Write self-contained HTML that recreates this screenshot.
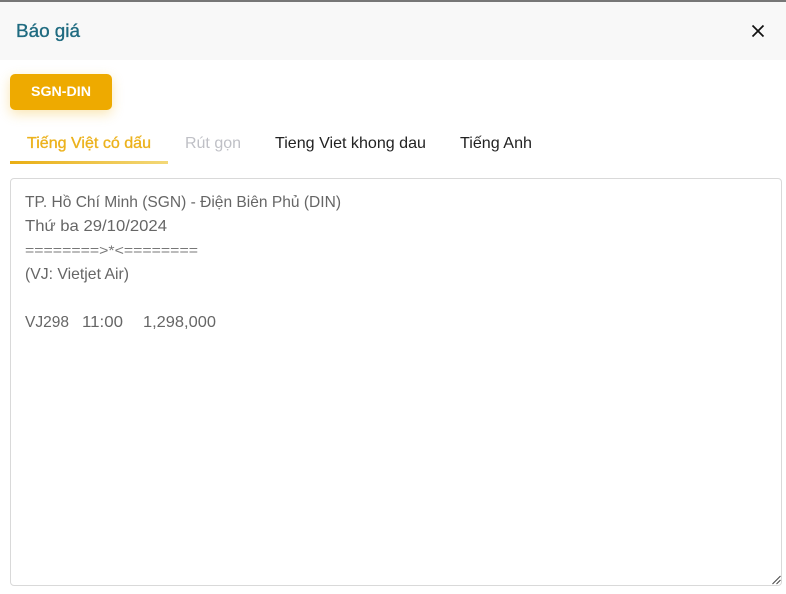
<!DOCTYPE html>
<html lang="vi">
<head>
<meta charset="utf-8">
<title>Báo giá</title>
<style>
html,body{margin:0;padding:0;width:786px;height:594px;overflow:hidden;background:#fff}
#top{position:absolute;left:0;top:0;width:786px;height:2px;background:#777}
#head{position:absolute;left:0;top:2px;width:786px;height:58px;background:#f8f8f8}
#btn{position:absolute;left:10px;top:74px;width:102px;height:36px;border-radius:5px;background:#eeaa00;box-shadow:0 4px 12px rgba(240,173,0,.3)}
#bar{position:absolute;left:10px;top:161px;width:158px;height:3px;background:linear-gradient(90deg,#e9ae14,#f3d878)}
#area{position:absolute;left:10px;top:178px;width:770px;height:406px;border:1px solid #d9d9d9;border-radius:4px;background:#fff}
svg{position:absolute;left:0;top:0}
text{font-family:"Liberation Sans",sans-serif}
.b{font-size:16px;fill:#666}
.t{font-size:16px}
</style>
</head>
<body>
<div id="top"></div>
<div id="head"></div>
<div id="btn"></div>
<div id="bar"></div>
<div id="area"></div>
<svg width="786" height="594" viewBox="0 0 786 594">
<text x="16" y="37" font-size="18" fill="#1f6b80" stroke="#1f6b80" stroke-width=".35" textLength="64" lengthAdjust="spacingAndGlyphs">Báo giá</text>
<path d="M752.500 25.500L763.500 36.500M763.500 25.500L752.500 36.500" stroke="#111" stroke-width="1.700" fill="none"/>
<text x="31" y="96" font-size="14" font-weight="700" fill="#fff" textLength="60" lengthAdjust="spacingAndGlyphs">SGN-DIN</text>
<text class="t" x="27" y="148" fill="#ecb21d" stroke="#ecb21d" stroke-width=".35" textLength="124" lengthAdjust="spacingAndGlyphs">Tiếng Việt có dấu</text>
<text class="t" x="185" y="148" fill="#bfc0c6" textLength="56" lengthAdjust="spacingAndGlyphs">Rút gọn</text>
<text class="t" x="275" y="148" fill="#222" textLength="151" lengthAdjust="spacingAndGlyphs">Tieng Viet khong dau</text>
<text class="t" x="460" y="148" fill="#222" textLength="72" lengthAdjust="spacingAndGlyphs">Tiếng Anh</text>
<text class="b" x="25" y="207" textLength="316" lengthAdjust="spacingAndGlyphs">TP. Hồ Chí Minh (SGN) - Điện Biên Phủ (DIN)</text>
<text class="b" x="25" y="231" textLength="142" lengthAdjust="spacingAndGlyphs">Thứ ba 29/10/2024</text>
<text x="25" y="255" font-size="14" fill="#777" textLength="173" lengthAdjust="spacingAndGlyphs">========&gt;*&lt;========</text>
<text class="b" x="25" y="279" textLength="104" lengthAdjust="spacingAndGlyphs">(VJ: Vietjet Air)</text>
<text class="b" x="25" y="327" textLength="44" lengthAdjust="spacingAndGlyphs">VJ298</text>
<text class="b" x="82" y="327" textLength="41" lengthAdjust="spacingAndGlyphs">11:00</text>
<text class="b" x="143" y="327" textLength="73" lengthAdjust="spacingAndGlyphs">1,298,000</text>
<path d="M772.500 584L780.500 576M776.500 584L780.500 580" stroke="#444" stroke-width="1" fill="none"/>
</svg>
</body>
</html>
